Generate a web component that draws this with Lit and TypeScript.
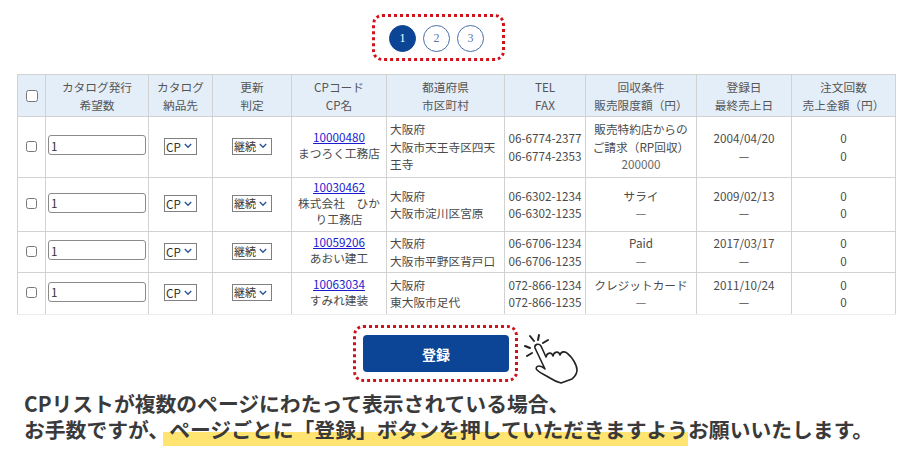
import { LitElement, css, html, svg } from "lit";
import { customElement } from "lit/decorators.js";

type Row = {
  code: string;
  name: string[];
  pref: string;
  city: string[];
  tel: string;
  fax: string;
  terms: string[];
  limit: string;
  date: string;
  rowClass: string;
};

const rows: Row[] = [
  {
    code: "10000480",
    name: ["まつろく工務店"],
    pref: "大阪府",
    city: ["大阪市天王寺区四天", "王寺"],
    tel: "06-6774-2377",
    fax: "06-6774-2353",
    terms: ["販売特約店からの", "ご請求（RP回収）"],
    limit: "200000",
    date: "2004/04/20",
    rowClass: "r1",
  },
  {
    code: "10030462",
    name: ["株式会社　ひか", "り工務店"],
    pref: "大阪府",
    city: ["大阪市淀川区宮原"],
    tel: "06-6302-1234",
    fax: "06-6302-1235",
    terms: ["サライ"],
    limit: "—",
    date: "2009/02/13",
    rowClass: "r2",
  },
  {
    code: "10059206",
    name: ["あおい建工"],
    pref: "大阪府",
    city: ["大阪市平野区背戸口"],
    tel: "06-6706-1234",
    fax: "06-6706-1235",
    terms: ["Paid"],
    limit: "—",
    date: "2017/03/17",
    rowClass: "r3",
  },
  {
    code: "10063034",
    name: ["すみれ建装"],
    pref: "大阪府",
    city: ["東大阪市足代"],
    tel: "072-866-1234",
    fax: "072-866-1235",
    terms: ["クレジットカード"],
    limit: "—",
    date: "2011/10/24",
    rowClass: "r4",
  },
];

const chevron = svg`<path d="M0.8 1 L4 4.2 L7.2 1" fill="none" stroke="#2f5597" stroke-width="1.4" />`;

@customElement("app-root")
export class AppRoot extends LitElement {
  static styles = css`
    :host {
      display: block;
      width: 910px;
      height: 467px;
      overflow: hidden;
      background: #fff;
      color: #4a4a4a;
      font-family: "Noto Sans CJK JP", "Noto Sans", sans-serif;
      font-size: 11.7px;
    }

    .pager-wrap {
      display: flex;
      padding: 14px 0 13px 372px;
    }

    .pager {
      display: flex;
      gap: 7px;
      width: 133px;
      height: 47px;
      box-sizing: border-box;
      padding: 8px 0 0 14px;
      border: 3px dotted #d0121b;
      border-radius: 10px;
    }

    .page {
      width: 27px;
      height: 27px;
      box-sizing: border-box;
      border: 1px solid #4a6fa5;
      border-radius: 50%;
      display: flex;
      align-items: center;
      justify-content: center;
      color: #5a7aa8;
      font-family: "Liberation Serif", serif;
      font-size: 12px;
    }

    .page.on {
      background: #0c4596;
      border-color: #0c4596;
      color: #fff;
    }

    table {
      table-layout: fixed;
      border-collapse: collapse;
      width: 879px;
      margin-left: 17px;
      line-height: 17.5px;
    }

    col.c1 { width: 28px; }
    col.c2 { width: 103px; }
    col.c3 { width: 64px; }
    col.c4 { width: 79px; }
    col.c5 { width: 95px; }
    col.c6 { width: 118px; }
    col.c7 { width: 81px; }
    col.c8 { width: 111px; }
    col.c9 { width: 95px; }
    col.c10 { width: 104px; }

    th,
    td {
      border: 1px solid #d2d2d2;
      padding: 0;
      text-align: center;
      vertical-align: middle;
      overflow: hidden;
      box-sizing: border-box;
    }

    td {
      padding-bottom: 1px;
    }

    th {
      height: 42px;
      background: #e4eef9;
      font-weight: 400;
      color: #555;
    }

    tr.r1 td { height: 61px; }
    tr.r2 td { height: 54px; }
    tr.r3 td { height: 41px; }
    tr.r4 td {
      height: 42px;
      border-bottom-color: #ececec;
    }

    .left {
      text-align: left;
      padding-left: 3px;
      white-space: nowrap;
    }

    td.nm {
      line-height: 16px;
      padding-bottom: 4px;
    }

    td.ctl {
      padding-bottom: 4px;
    }

    td.chk {
      padding-bottom: 6px;
    }

    .limit {
      color: #666;
    }

    a {
      color: #1a1ad0;
      text-decoration: underline;
    }

    input[type="checkbox"] {
      width: 11px;
      height: 11px;
      margin: 0;
      vertical-align: middle;
      accent-color: #0c4596;
    }

    th input[type="checkbox"] {
      width: 12px;
      height: 12px;
      margin-bottom: 3px;
    }

    input[type="text"] {
      display: block;
      box-sizing: border-box;
      width: 98px;
      height: 20px;
      margin-left: 2px;
      padding: 0 2px;
      border: 1px solid #8a8a8a;
      border-radius: 3px;
      background: #fff;
      color: #333;
      font: inherit;
    }

    .select {
      display: inline-flex;
      align-items: center;
      box-sizing: border-box;
      height: 17px;
      border: 1px solid #808080;
      background: #fff;
      vertical-align: middle;
    }

    .select.cp { width: 33px; }
    .select.st { width: 40px; }

    .select select {
      appearance: none;
      border: 0;
      background: transparent;
      padding: 0 0 0 1px;
      margin: 0;
      flex: 1;
      min-width: 0;
      color: #333;
      font: inherit;
      line-height: 15px;
      outline: none;
    }

    .select.st select {
      font-size: 11px;
    }

    .select svg {
      flex: none;
      width: 8px;
      height: 6px;
      margin-right: 4px;
    }

    .submit-wrap {
      display: flex;
      padding: 10px 0 8px 353px;
    }

    .submit {
      position: relative;
      box-sizing: border-box;
      width: 165px;
      height: 57px;
      padding: 7px;
      border: 3px dotted #d0121b;
      border-radius: 10px;
    }

    button {
      display: block;
      width: 146px;
      height: 37px;
      border: 0;
      border-radius: 4px;
      background: #0c4596;
      color: #fff;
      font: inherit;
      font-size: 14px;
      font-weight: 700;
    }

    .hand {
      position: absolute;
      left: 168px;
      top: 5px;
      width: 56px;
      height: 52px;
      overflow: visible;
    }

    .note {
      margin: 0;
      padding-left: 24px;
      color: #3a3a3a;
      font-size: 20.8px;
      font-weight: 700;
      line-height: 26px;
      white-space: nowrap;
    }

    .mark {
      margin-left: -6px;
      padding: 0 0 2px 6px;
      background: linear-gradient(transparent 56%, #ffe471 56%);
    }
  `;

  private renderRow(row: Row) {
    return html`
      <tr class=${row.rowClass}>
        <td class="chk"><input type="checkbox" /></td>
        <td class="ctl"><input type="text" value="1" /></td>
        <td class="ctl">
          <span class="select cp">
            <select><option>CP</option></select>
            <svg viewBox="0 0 8 6">${chevron}</svg>
          </span>
        </td>
        <td class="ctl">
          <span class="select st">
            <select><option>継続</option></select>
            <svg viewBox="0 0 8 6">${chevron}</svg>
          </span>
        </td>
        <td class="nm">
          <a href="#">${row.code}</a>
          ${row.name.map((n) => html`<div>${n}</div>`)}
        </td>
        <td class="left">
          <div>${row.pref}</div>
          ${row.city.map((c) => html`<div>${c}</div>`)}
        </td>
        <td>
          <div>${row.tel}</div>
          <div>${row.fax}</div>
        </td>
        <td>
          ${row.terms.map((t) => html`<div>${t}</div>`)}
          <div class="limit">${row.limit}</div>
        </td>
        <td>
          <div>${row.date}</div>
          <div>—</div>
        </td>
        <td>
          <div>0</div>
          <div>0</div>
        </td>
      </tr>
    `;
  }

  protected render() {
    return html`
      <div class="pager-wrap">
        <div class="pager">
          <span class="page on">1</span>
          <span class="page">2</span>
          <span class="page">3</span>
        </div>
      </div>

      <table>
        <colgroup>
          <col class="c1" /><col class="c2" /><col class="c3" /><col class="c4" />
          <col class="c5" /><col class="c6" /><col class="c7" /><col class="c8" />
          <col class="c9" /><col class="c10" />
        </colgroup>
        <thead>
          <tr>
            <th><input type="checkbox" /></th>
            <th>カタログ発行<br />希望数</th>
            <th>カタログ<br />納品先</th>
            <th>更新<br />判定</th>
            <th>CPコード<br />CP名</th>
            <th>都道府県<br />市区町村</th>
            <th>TEL<br />FAX</th>
            <th>回収条件<br />販売限度額（円）</th>
            <th>登録日<br />最終売上日</th>
            <th>注文回数<br />売上金額（円）</th>
          </tr>
        </thead>
        <tbody>
          ${rows.map((row) => this.renderRow(row))}
        </tbody>
      </table>

      <div class="submit-wrap">
        <div class="submit">
          <button>登録</button>
          <svg class="hand" viewBox="0 0 56 52" fill="none" stroke="#222" stroke-linecap="round" stroke-linejoin="round">
            <g stroke-width="2">
              <path d="M1 13 L6 15" />
              <path d="M6 3 L10 8" />
              <path d="M15 2 L14 7" />
              <path d="M24 7 L19 10" />
              <path d="M3 23 L8 20" />
            </g>
            <path
              stroke-width="1.6"
              fill="#fff"
              d="M11 15 C10 11 15 10 17 13 L22 24 C23 19 28 19 29 23 C30 18 35 18 36 22 C37 18 42 18 44 21 C48 24 53 32 53 37 C53 42 50 44 48 46 L37 50 C33 49 29 47 26 45 C22 42 17 41 13 37 C11 35 13 33 15 33 C17 33 19 34 21 36 Z"
            />
          </svg>
        </div>
      </div>

      <p class="note">
        CPリストが複数のページにわたって表示されている場合、<br />お手数ですが、<span class="mark">ページごとに「登録」ボタンを押していただきますよう</span>お願いいたします。
      </p>
    `;
  }
}
